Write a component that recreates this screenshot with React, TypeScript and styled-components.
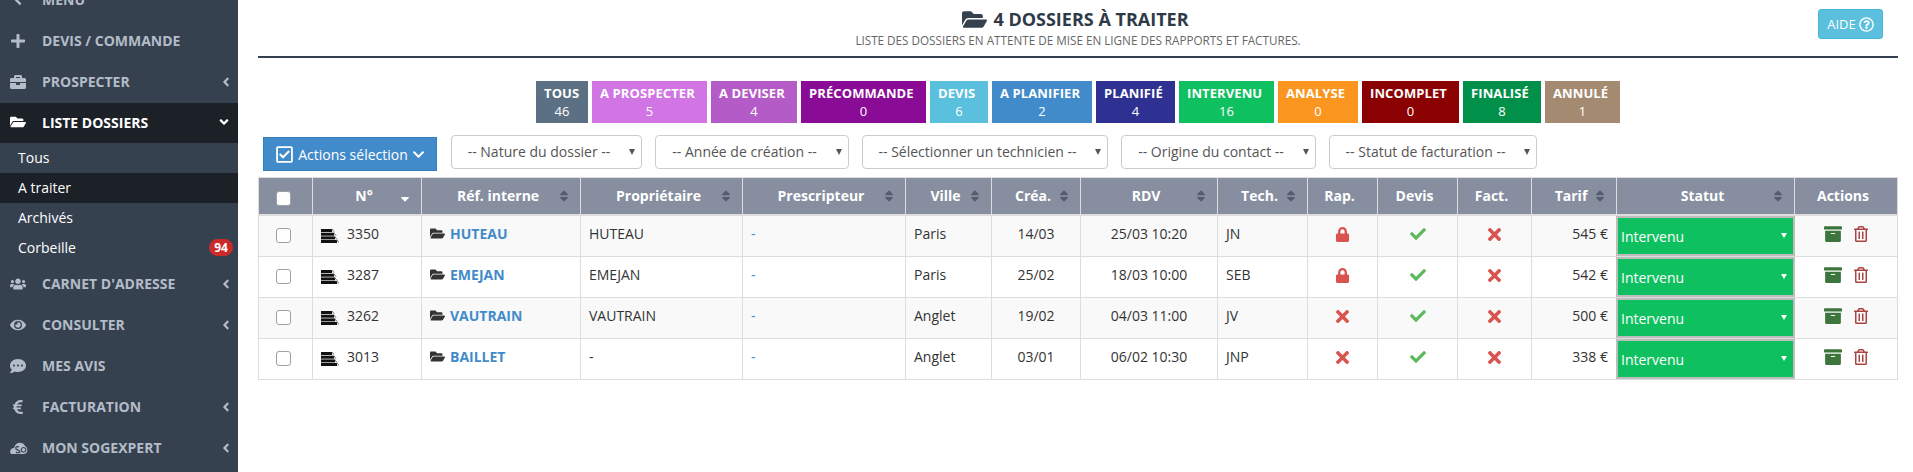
import React from "react";
import styled, { createGlobalStyle } from "styled-components";
import {
  FaPlus,
  FaBriefcase,
  FaFolderOpen,
  FaUsers,
  FaEye,
  FaCommentDots,
  FaEuroSign,
  FaAngleLeft,
  FaAngleDown,
  FaSort,
  FaSortDown,
  FaLock,
  FaCheck,
  FaTimes,
  FaArchive,
  FaRegTrashAlt,
  FaRegCheckSquare,
  FaChevronDown,
  FaRegQuestionCircle,
} from "react-icons/fa";

const GlobalStyle = createGlobalStyle`
  html, body {
    margin: 0;
    padding: 0;
    height: 100%;
    overflow: hidden;
    background: #fff;
    font-family: "Open Sans", "Liberation Sans", sans-serif;
    color: #333;
  }
  * {
    box-sizing: border-box;
  }
`;

const Page = styled.div`
  display: flex;
  height: 472px;
  overflow: hidden;
`;

const Sidebar = styled.nav`
  width: 238px;
  flex: none;
  background: #364150;
  overflow: hidden;
`;

const SideList = styled.div`
  margin-top: -20px;
`;

const SideItem = styled.div<{ $active?: boolean }>`
  display: flex;
  align-items: center;
  height: ${({ $active }) => ($active ? "40px" : "41px")};
  padding: 0 ${({ $active }) => ($active ? "7px" : "5px")} 2px 10px;
  font-size: 14px;
  font-weight: 700;
  text-transform: uppercase;
  color: ${({ $active }) => ($active ? "#fff" : "#b4bcc8")};
  background: ${({ $active }) => ($active ? "#1c2027" : "transparent")};
`;

const SideIcon = styled.span`
  width: 32px;
  flex: none;
  display: flex;
  align-items: center;
  font-size: 16px;
`;

const SideLabel = styled.span`
  flex: 1;
`;

const SubList = styled.div`
  padding-bottom: 1px;
`;

const SubItem = styled.div<{ $active?: boolean }>`
  display: flex;
  align-items: center;
  justify-content: space-between;
  height: 30px;
  padding: 0 5px 2px 18px;
  font-size: 14px;
  color: #fff;
  background: ${({ $active }) => ($active ? "#1c2027" : "transparent")};
`;

const Badge = styled.span`
  width: 24px;
  height: 17px;
  line-height: 17px;
  border-radius: 9px;
  background: #cb2a2a;
  color: #fff;
  font-size: 12px;
  font-weight: 700;
  text-align: center;
`;

const Main = styled.main`
  flex: 1;
  min-width: 0;
  padding: 0 15px 0 20px;
`;

const PageHeader = styled.header`
  display: grid;
  grid-template-columns: 1fr auto 1fr;
  height: 58px;
  border-bottom: 2px solid #364150;
`;

const Heading = styled.div`
  grid-column: 2;
  text-align: center;
`;

const Title = styled.h1`
  display: flex;
  align-items: center;
  justify-content: center;
  gap: 6px;
  margin: 7px 0 0;
  padding-right: 5px;
  height: 24px;
  font-size: 18px;
  font-weight: 700;
  text-transform: uppercase;
  color: #2f3a48;
  svg {
    font-size: 25px;
    color: #364150;
  }
`;

const Subtitle = styled.p`
  margin: 1px 0 0;
  font-size: 11.7px;
  line-height: 16px;
  text-transform: uppercase;
  color: #666;
`;

const HelpButton = styled.button`
  grid-column: 3;
  justify-self: end;
  display: flex;
  align-items: center;
  justify-content: center;
  gap: 3px;
  width: 65px;
  height: 30px;
  margin: 9px 15px 0 0;
  padding: 0;
  border: 1px solid #46b8da;
  border-radius: 3px;
  background: #5bc0de;
  color: #fff;
  font-family: inherit;
  font-size: 13px;
  svg {
    font-size: 15px;
  }
`;

const TileRow = styled.div`
  display: flex;
  justify-content: center;
  gap: 4px;
  margin-top: 23px;
`;

const Tile = styled.div<{ $color: string; $width: number }>`
  width: ${({ $width }) => $width}px;
  height: 42px;
  padding-top: 3px;
  background: ${({ $color }) => $color};
  color: #fff;
  font-size: 13px;
  line-height: 18px;
  text-align: center;
  strong {
    display: block;
    padding-left: 8px;
    font-weight: 700;
    letter-spacing: 0.1px;
    text-align: left;
    white-space: nowrap;
  }
`;

const FilterRow = styled.div`
  display: flex;
  align-items: flex-start;
  margin: 12px 0 0 5px;
`;

const ActionButton = styled.button`
  display: flex;
  align-items: center;
  justify-content: center;
  gap: 4px;
  width: 174px;
  height: 34px;
  margin: 2px 14px 0 0;
  padding: 0;
  border: 1px solid #357ebd;
  background: #428bca;
  color: #fff;
  font-family: inherit;
  font-size: 14px;
  svg:first-child {
    font-size: 19px;
  }
  svg:last-child {
    font-size: 13px;
  }
`;

const FilterSelect = styled.div<{ $width: number }>`
  position: relative;
  width: ${({ $width }) => $width}px;
  height: 34px;
  margin-right: 13px;
  border: 1px solid #ccc;
  border-radius: 4px;
  background: #fff;
  color: #555;
  font-size: 14px;
  line-height: 32px;
  padding-right: 15px;
  text-align: center;
  white-space: nowrap;
  &::after {
    content: "";
    position: absolute;
    right: 6px;
    top: 13px;
    border-style: solid;
    border-width: 6px 3.5px 0;
    border-color: #555 transparent transparent;
  }
`;

const Table = styled.table`
  width: 1639px;
  margin: 6px 0 0;
  table-layout: fixed;
  border-collapse: collapse;
  font-size: 14px;
`;

const Th = styled.th`
  position: relative;
  height: 37px;
  padding: 0 14px 0 8px;
  border: 1px solid #ddd;
  border-bottom-width: 2px;
  background: #868ea0;
  color: #fff;
  font-size: 14px;
  font-weight: 700;
  text-align: center;
`;

const SortMark = styled.span<{ $active?: boolean }>`
  position: absolute;
  right: 9px;
  top: 11px;
  display: flex;
  font-size: 14px;
  color: ${({ $active }) => ($active ? "#fff" : "#555c6c")};
`;

const Row = styled.tr<{ $odd: boolean }>`
  background: ${({ $odd }) => ($odd ? "#f9f9f9" : "#fff")};
`;

const Td = styled.td<{ $align?: string }>`
  height: 41px;
  padding: 0 8px 5px;
  border: 1px solid #ddd;
  color: #333;
  text-align: ${({ $align }) => $align || "left"};
  white-space: nowrap;
`;

const IconCell = styled(Td)`
  padding: 0 0 3px;
  svg {
    display: block;
    margin: 0 auto;
  }
`;

const StatusCell = styled.td`
  padding: 0;
  border: 1px solid #ddd;
  height: 41px;
`;

const StatusSelect = styled.div`
  position: relative;
  height: 40px;
  margin: 0 -1px;
  padding: 7px 0 0 3px;
  border: 2px solid #bdbdbd;
  background: #0fc060;
  color: #fff;
  font-size: 14px;
  line-height: 24px;
  &::after {
    content: "";
    position: absolute;
    right: 6px;
    top: 15px;
    border-style: solid;
    border-width: 5px 3px 0;
    border-color: #fff transparent transparent;
  }
`;

const Check = styled.input`
  appearance: none;
  display: block;
  width: 15px;
  height: 15px;
  margin: 5px 0 0 9px;
  border: 1px solid #a0a0a0;
  border-radius: 3px;
  background: #fff;
`;

const RefLink = styled.a`
  display: inline-flex;
  align-items: center;
  gap: 5px;
  margin-top: 2px;
  color: #428bca;
  font-weight: 700;
  font-size: 14px;
  svg {
    color: #333;
    font-size: 15px;
  }
`;

const FileNumber = styled.span`
  display: flex;
  align-items: center;
  gap: 8px;
  svg {
    margin-top: 6px;
  }
`;

const ActionIcons = styled.span`
  display: flex;
  align-items: center;
  justify-content: center;
  gap: 11px;
  svg {
    margin: 0;
  }
`;

const Dash = styled.span`
  color: #428bca;
`;

const Books = () => (
  <svg width="18" height="14" viewBox="0 0 18 14">
    <rect x="0" y="0" width="11" height="3" fill="#111" />
    <rect x="0" y="3.7" width="13" height="3" fill="#111" />
    <rect x="0" y="7.4" width="14" height="3" fill="#111" />
    <rect x="0" y="11" width="16" height="3" fill="#111" />
    <path d="M11 0 L13 3 M13 4 L15 7 M14 8 L16 11 M16 11 L18 14" stroke="#666" strokeWidth="1.3" strokeDasharray="1 .6" />
  </svg>
);

const SogexpertLogo = () => (
  <svg width="18" height="14" viewBox="0 0 18 14">
    <path
      d="M1 13 C-1 10 1 7 4 7 C5 3 8 1 11 2 C13 2 14 3 15 5 C17 6 18 9 17 11 C16 13 14 13 12 13 Z"
      fill="#b4bcc8"
    />
    <path
      d="M9 6 C7 5 5 6 6 8 C7 9 10 9 10 11 C9 12 7 12 6 11 M13.500 6.500 a2.300 2.300 0 1 0 0.100 0 Z"
      fill="none"
      stroke="#364150"
      strokeWidth="1.2"
    />
  </svg>
);

const menuTop = [
  { icon: <FaAngleLeft />, label: "Menu" },
  { icon: <FaPlus />, label: "Devis / Commande" },
  { icon: <FaBriefcase />, label: "Prospecter", arrow: true },
];

const menuBottom = [
  { icon: <FaUsers />, label: "Carnet d'adresse", arrow: true },
  { icon: <FaEye />, label: "Consulter", arrow: true },
  { icon: <FaCommentDots />, label: "Mes avis" },
  { icon: <FaEuroSign />, label: "Facturation", arrow: true },
  { icon: <SogexpertLogo />, label: "Mon Sogexpert", arrow: true },
];

const tiles = [
  { label: "TOUS", count: 46, color: "#5b7083", width: 52 },
  { label: "A PROSPECTER", count: 5, color: "#d175e5", width: 115 },
  { label: "A DEVISER", count: 4, color: "#b55bc7", width: 86 },
  { label: "PRÉCOMMANDE", count: 0, color: "#8a0b96", width: 125 },
  { label: "DEVIS", count: 6, color: "#5bc0de", width: 58 },
  { label: "A PLANIFIER", count: 2, color: "#428bca", width: 100 },
  { label: "PLANIFIÉ", count: 4, color: "#2f3192", width: 79 },
  { label: "INTERVENU", count: 16, color: "#0fc060", width: 95 },
  { label: "ANALYSE", count: 0, color: "#fa961f", width: 80 },
  { label: "INCOMPLET", count: 0, color: "#8b0000", width: 97 },
  { label: "FINALISÉ", count: 8, color: "#009049", width: 78 },
  { label: "ANNULÉ", count: 1, color: "#a58a72", width: 75 },
];

const filters = [
  { label: "-- Nature du dossier --", width: 191 },
  { label: "-- Année de création --", width: 194 },
  { label: "-- Sélectionner un technicien --", width: 246 },
  { label: "-- Origine du contact --", width: 195 },
  { label: "-- Statut de facturation --", width: 208 },
];

const columns = [
  { label: "", width: 54 },
  { label: "N°", width: 109, sort: "active" },
  { label: "Réf. interne", width: 159, sort: "idle" },
  { label: "Propriétaire", width: 162, sort: "idle" },
  { label: "Prescripteur", width: 163, sort: "idle" },
  { label: "Ville", width: 86, sort: "idle" },
  { label: "Créa.", width: 89, sort: "idle" },
  { label: "RDV", width: 137, sort: "idle" },
  { label: "Tech.", width: 90, sort: "idle" },
  { label: "Rap.", width: 70 },
  { label: "Devis", width: 80 },
  { label: "Fact.", width: 74 },
  { label: "Tarif", width: 85, sort: "idle" },
  { label: "Statut", width: 178, sort: "idle" },
  { label: "Actions", width: 103 },
];

const dossiers = [
  { no: 3350, ref: "HUTEAU", owner: "HUTEAU", city: "Paris", created: "14/03", rdv: "25/03 10:20", tech: "JN", report: "lock", price: "545 €" },
  { no: 3287, ref: "EMEJAN", owner: "EMEJAN", city: "Paris", created: "25/02", rdv: "18/03 10:00", tech: "SEB", report: "lock", price: "542 €" },
  { no: 3262, ref: "VAUTRAIN", owner: "VAUTRAIN", city: "Anglet", created: "19/02", rdv: "04/03 11:00", tech: "JV", report: "none", price: "500 €" },
  { no: 3013, ref: "BAILLET", owner: "-", city: "Anglet", created: "03/01", rdv: "06/02 10:30", tech: "JNP", report: "none", price: "338 €" },
];

const App: React.FC = () => {
  return (
    <Page>
      <GlobalStyle />
      <Sidebar>
        <SideList>
          {menuTop.map(item => (
            <SideItem key={item.label}>
              <SideIcon>{item.icon}</SideIcon>
              <SideLabel>{item.label}</SideLabel>
              {item.arrow && <FaAngleLeft />}
            </SideItem>
          ))}
          <SideItem $active>
            <SideIcon><FaFolderOpen /></SideIcon>
            <SideLabel>Liste dossiers</SideLabel>
            <FaAngleDown />
          </SideItem>
          <SubList>
            <SubItem>Tous</SubItem>
            <SubItem $active>A traiter</SubItem>
            <SubItem>Archivés</SubItem>
            <SubItem>Corbeille<Badge>94</Badge></SubItem>
          </SubList>
          {menuBottom.map(item => (
            <SideItem key={item.label}>
              <SideIcon>{item.icon}</SideIcon>
              <SideLabel>{item.label}</SideLabel>
              {item.arrow && <FaAngleLeft />}
            </SideItem>
          ))}
        </SideList>
      </Sidebar>
      <Main>
        <PageHeader>
          <Heading>
            <Title><FaFolderOpen />4 dossiers à traiter</Title>
            <Subtitle>Liste des dossiers en attente de mise en ligne des rapports et factures.</Subtitle>
          </Heading>
          <HelpButton>AIDE <FaRegQuestionCircle /></HelpButton>
        </PageHeader>
        <TileRow>
          {tiles.map(tile => (
            <Tile key={tile.label} $color={tile.color} $width={tile.width}>
              <strong>{tile.label}</strong>
              {tile.count}
            </Tile>
          ))}
        </TileRow>
        <FilterRow>
          <ActionButton><FaRegCheckSquare />Actions sélection<FaChevronDown /></ActionButton>
          {filters.map(filter => (
            <FilterSelect key={filter.label} $width={filter.width}>{filter.label}</FilterSelect>
          ))}
        </FilterRow>
        <Table>
          <colgroup>
            {columns.map((col, i) => <col key={i} width={col.width} />)}
          </colgroup>
          <thead>
            <tr>
              {columns.map((col, i) => (
                <Th key={i}>
                  {i === 0 ? <Check type="checkbox" /> : col.label}
                  {col.sort && (
                    <SortMark $active={col.sort === "active"}>
                      {col.sort === "active" ? <FaSortDown /> : <FaSort />}
                    </SortMark>
                  )}
                </Th>
              ))}
            </tr>
          </thead>
          <tbody>
            {dossiers.map((d, i) => (
              <Row key={d.no} $odd={i % 2 === 0}>
                <Td><Check type="checkbox" /></Td>
                <Td><FileNumber><Books />{d.no}</FileNumber></Td>
                <Td><RefLink><FaFolderOpen />{d.ref}</RefLink></Td>
                <Td>{d.owner}</Td>
                <Td><Dash>-</Dash></Td>
                <Td>{d.city}</Td>
                <Td $align="center">{d.created}</Td>
                <Td $align="center">{d.rdv}</Td>
                <Td>{d.tech}</Td>
                <IconCell>
                  {d.report === "lock"
                    ? <FaLock color="#d9534f" size={15} />
                    : <FaTimes color="#d9534f" size={19} />}
                </IconCell>
                <IconCell><FaCheck color="#5cb85c" size={16} /></IconCell>
                <IconCell><FaTimes color="#d9534f" size={19} /></IconCell>
                <Td $align="right">{d.price}</Td>
                <StatusCell><StatusSelect>Intervenu</StatusSelect></StatusCell>
                <IconCell>
                  <ActionIcons>
                    <FaArchive color="#3c763d" size={18} />
                    <FaRegTrashAlt color="#a94442" size={16} />
                  </ActionIcons>
                </IconCell>
              </Row>
            ))}
          </tbody>
        </Table>
      </Main>
    </Page>
  );
};

export default App;
